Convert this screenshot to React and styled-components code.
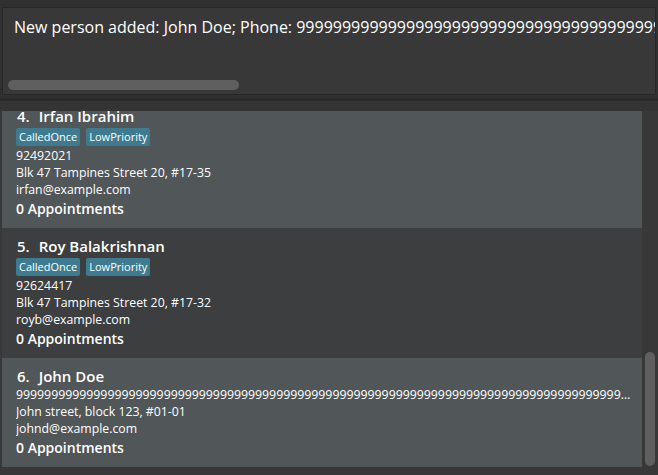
import styled, { createGlobalStyle } from "styled-components";

const GlobalStyle = createGlobalStyle`
  html, body {
    margin: 0;
    padding: 0;
    background: #303030;
  }
  * {
    box-sizing: border-box;
  }
`;

const Window = styled.div`
  width: 658px;
  height: 475px;
  background: #303030;
  display: flex;
  flex-direction: column;
  overflow: hidden;
  font-family: "Segoe UI", "Open Sans", sans-serif;
  color: #ffffff;
`;

const ResultBox = styled.div`
  margin: 7px 2px 0 2px;
  height: 88px;
  border: 1px solid #272727;
  background: #383838;
  display: flex;
  flex-direction: column;
  overflow: hidden;
`;

const ResultText = styled.div`
  padding: 9px 0 0 11px;
  font-size: 16px;
  line-height: 21px;
  white-space: nowrap;
`;

const HThumb = styled.div`
  margin: auto 0 4px 5px;
  width: 231px;
  height: 10px;
  border-radius: 5px;
  background: #5f5f5f;
`;

const Separator = styled.div`
  margin-top: 3px;
  height: 13px;
  border-top: 3px solid #2a2a2a;
  background: #343434;
`;

const ListArea = styled.div`
  flex: 1;
  display: flex;
  background: #383838;
  min-height: 0;
`;

const Viewport = styled.div`
  width: 642px;
  padding-left: 2px;
  overflow: hidden;
`;

const CardList = styled.div`
  margin-top: -13px;
`;

const Card = styled.div`
  background: ${({ $odd }) => ($odd ? "#3c3e3f" : "#515658")};
  padding: 8px 9px 9px 14px;
  display: flex;
  flex-direction: column;
`;

const NameRow = styled.div`
  display: flex;
  gap: 9px;
  padding-left: 1px;
  font-size: 15px;
  font-weight: 600;
  line-height: 20px;
`;

const Tags = styled.div`
  display: flex;
  gap: 6px;
  margin: 2px 0 1px 0;
`;

const Tag = styled.span`
  background: #3e7b91;
  border-radius: 2px;
  padding: 0 3px;
  height: 18px;
  font-size: 11px;
  line-height: 18px;
`;

const Line = styled.div`
  font-size: 12.3px;
  line-height: 17px;
  white-space: nowrap;
  overflow: hidden;
  text-overflow: ellipsis;
`;

const Appointments = styled.div`
  font-size: 14px;
  font-weight: 600;
  line-height: 21px;
`;

const Track = styled.div`
  width: 16px;
  padding: 241px 0 0 3px;
`;

const VThumb = styled.div`
  width: 10px;
  height: 114px;
  border-radius: 5px;
  background: #5f5f5f;
`;

const persons = [
  {
    id: 4,
    name: "Irfan Ibrahim",
    tags: ["CalledOnce", "LowPriority"],
    phone: "92492021",
    address: "Blk 47 Tampines Street 20, #17-35",
    email: "irfan@example.com",
  },
  {
    id: 5,
    name: "Roy Balakrishnan",
    tags: ["CalledOnce", "LowPriority"],
    phone: "92624417",
    address: "Blk 47 Tampines Street 20, #17-32",
    email: "royb@example.com",
  },
  {
    id: 6,
    name: "John Doe",
    tags: [],
    phone: "9".repeat(120),
    address: "John street, block 123, #01-01",
    email: "johnd@example.com",
  },
];

const App = () => {
  return (
    <>
      <GlobalStyle />
      <Window>
        <ResultBox>
          <ResultText>
            New person added: John Doe; Phone: {"9".repeat(60)}
          </ResultText>
          <HThumb />
        </ResultBox>
        <Separator />
        <ListArea>
          <Viewport>
            <CardList>
              {persons.map((p) => (
                <Card key={p.id} $odd={p.id % 2 === 1}>
                  <NameRow>
                    <span>{p.id}.</span>
                    <span>{p.name}</span>
                  </NameRow>
                  {p.tags.length > 0 && (
                    <Tags>
                      {p.tags.map((t) => (
                        <Tag key={t}>{t}</Tag>
                      ))}
                    </Tags>
                  )}
                  <Line>{p.phone}</Line>
                  <Line>{p.address}</Line>
                  <Line>{p.email}</Line>
                  <Appointments>0 Appointments</Appointments>
                </Card>
              ))}
            </CardList>
          </Viewport>
          <Track>
            <VThumb />
          </Track>
        </ListArea>
      </Window>
    </>
  );
};

export default App;
